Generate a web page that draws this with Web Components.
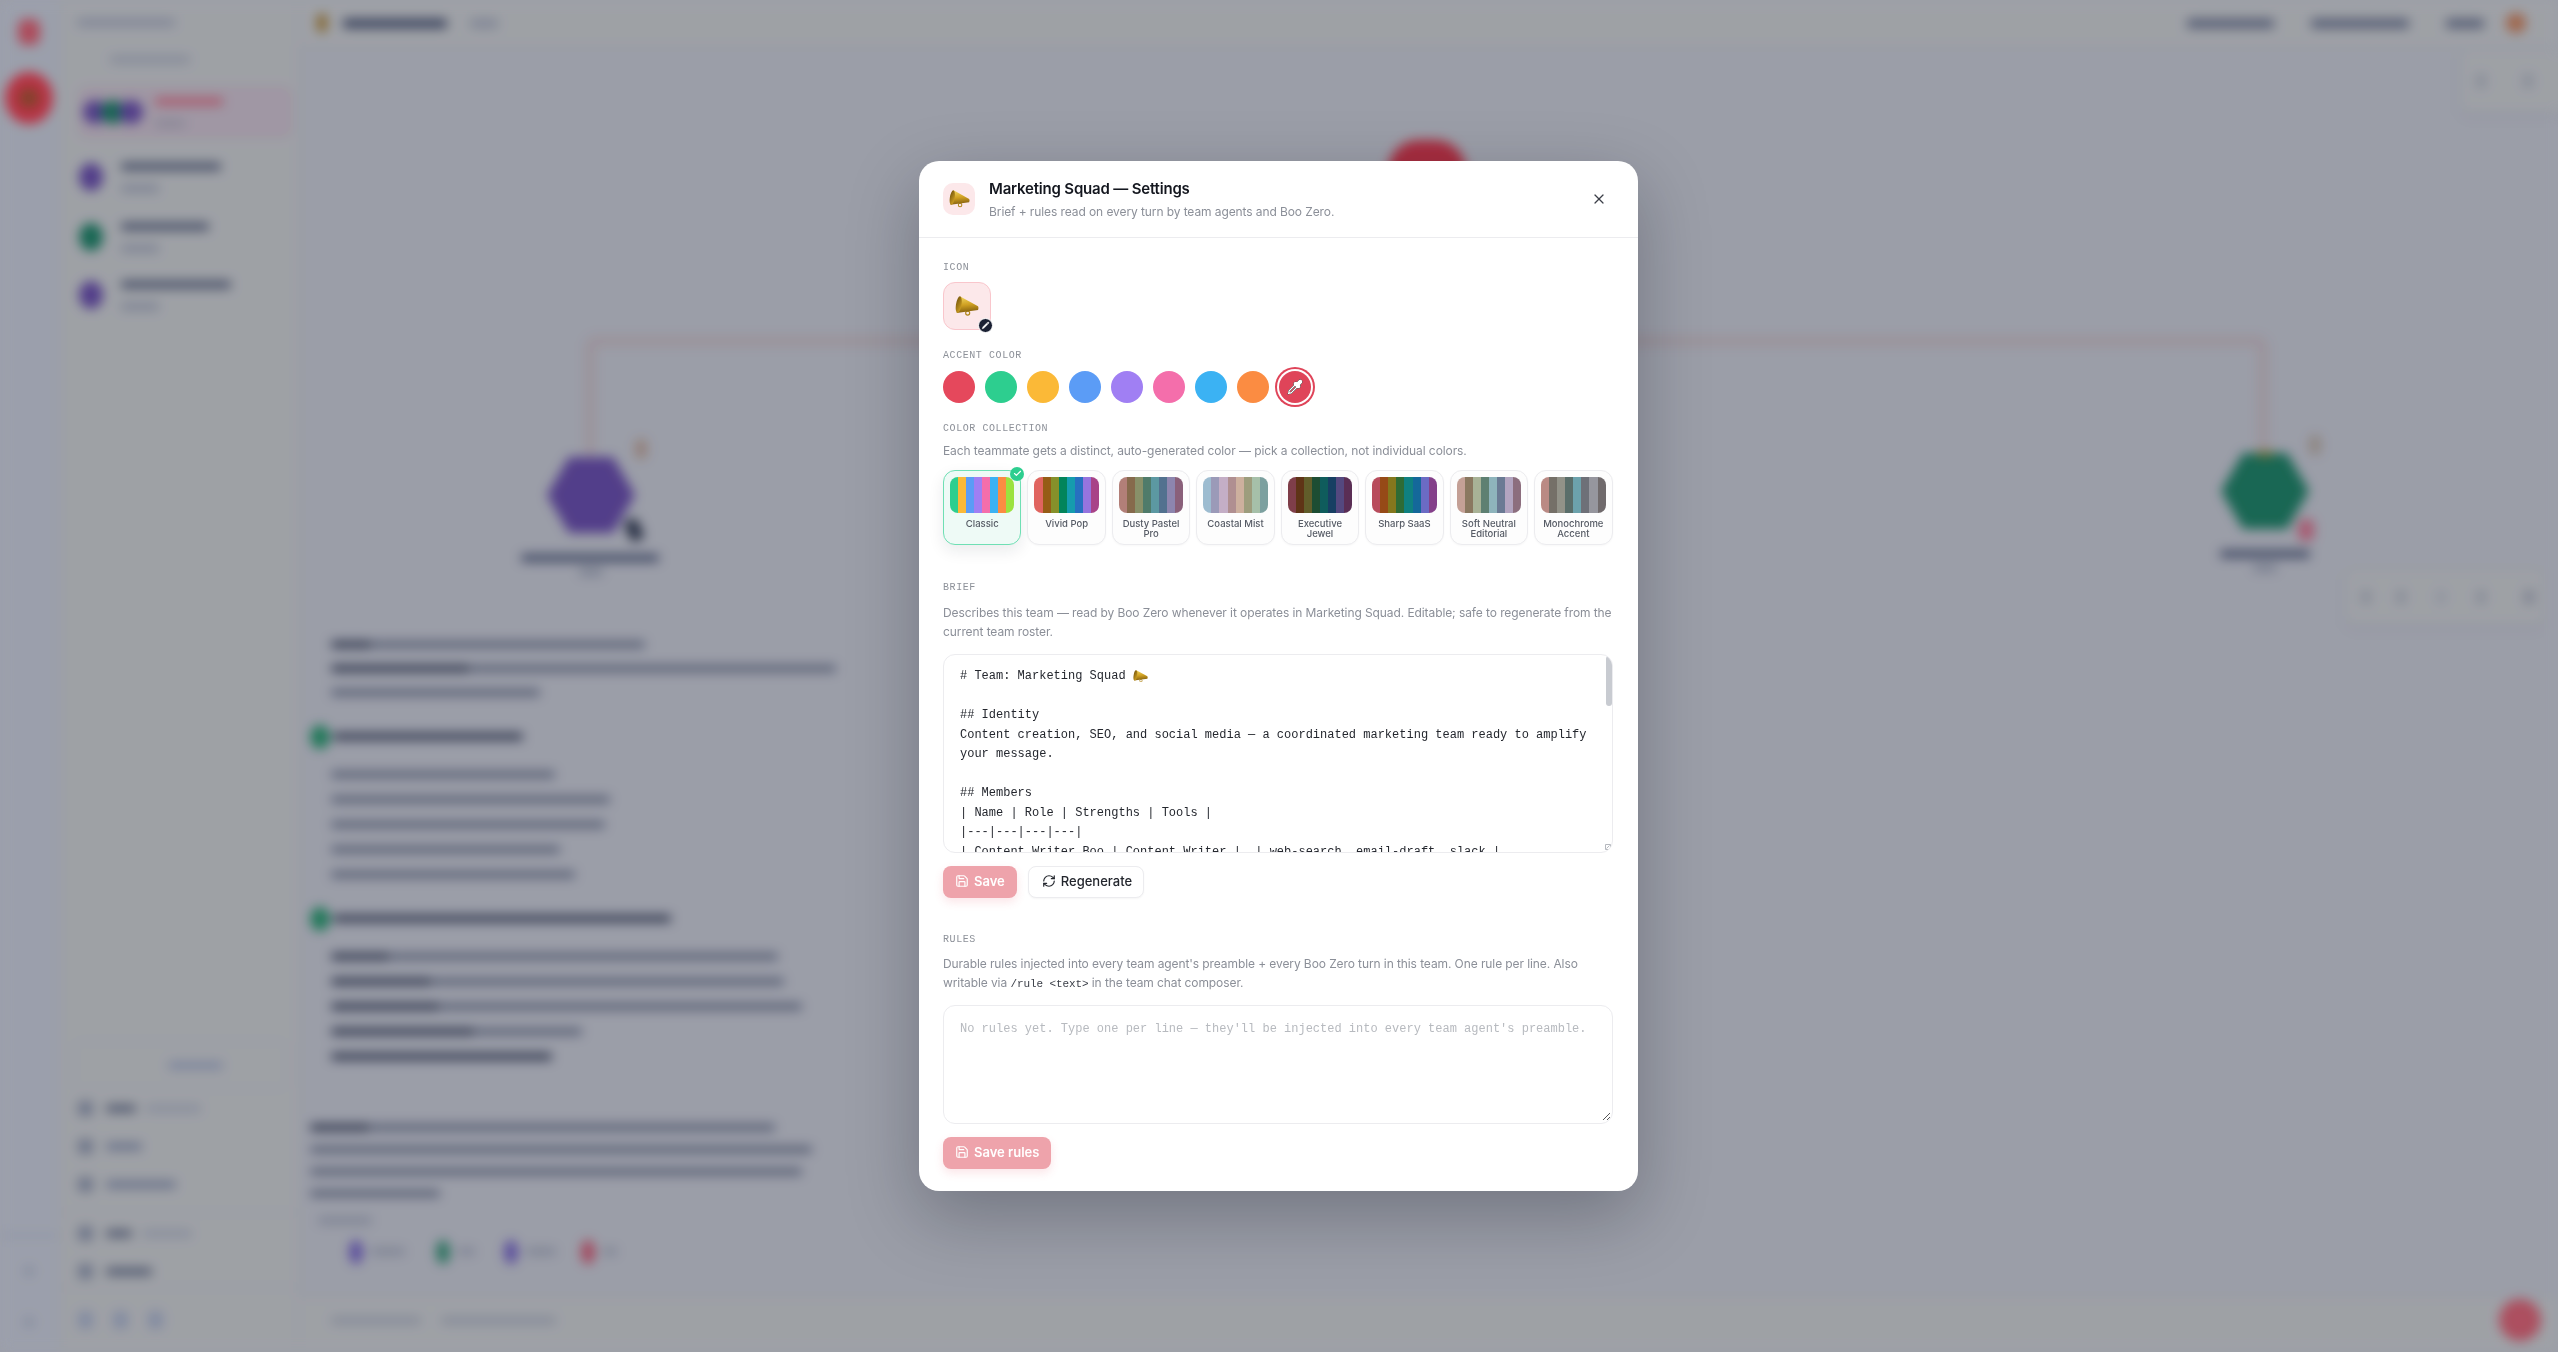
<!DOCTYPE html>
<html lang="en">
<head>
<meta charset="utf-8">
<title>Marketing Squad — Settings</title>
<style>
  html, body { margin: 0; height: 100%; overflow: hidden; background: #faf8f7; }
  body { font-family: Inter, "Liberation Sans", sans-serif; }
</style>
</head>
<body>
<app-page></app-page>

<script>
// Shared lucide icon paths
const ICONS = {
  save: '<path d="M15.2 3a2 2 0 0 1 1.4.6l3.8 3.8a2 2 0 0 1 .6 1.4V19a2 2 0 0 1-2 2H5a2 2 0 0 1-2-2V5a2 2 0 0 1 2-2z"/><path d="M17 21v-7a1 1 0 0 0-1-1H8a1 1 0 0 0-1 1v7"/><path d="M7 3v4a1 1 0 0 0 1 1h7"/>',
  refresh: '<path d="M3 12a9 9 0 0 1 9-9 9.75 9.75 0 0 1 6.74 2.74L21 8"/><path d="M21 3v5h-5"/><path d="M21 12a9 9 0 0 1-9 9 9.75 9.75 0 0 1-6.74-2.74L3 16"/><path d="M8 16H3v5"/>',
  x: '<path d="M18 6 6 18"/><path d="m6 6 12 12"/>',
  check: '<path d="M20 6 9 17l-5-5"/>',
  pencil: '<path fill="#fff" d="M21.174 6.812a1 1 0 0 0-3.986-3.987L3.842 16.174a2 2 0 0 0-.5.83l-1.321 4.352a.5.5 0 0 0 .623.622l4.353-1.32a2 2 0 0 0 .83-.497z"/><path stroke="#1a2033" d="m15 5 4 4"/>',
  pipette: '<path d="m2 22 1-1h3l9-9"/><path d="M3 21v-3l9-9"/><path fill="#fff" stroke="#fff" d="m15 6 3.4-3.4a2.1 2.1 0 1 1 3 3L18 9l.4.4a2.1 2.1 0 1 1-3 3l-3.8-3.8a2.1 2.1 0 1 1 3-3l.4.4Z"/>'
};

function icon(name, size, width) {
  return `<svg xmlns="http://www.w3.org/2000/svg" width="${size}" height="${size}" viewBox="0 0 24 24" fill="none" stroke="currentColor" stroke-width="${width || 2}" stroke-linecap="round" stroke-linejoin="round">${ICONS[name]}</svg>`;
}

// Base class: shadow root filled once from the html() of the subclass
class ShadowElement extends HTMLElement {
  constructor() {
    super();
    this.attachShadow({ mode: "open" });
  }
  connectedCallback() {
    if (!this.shadowRoot.innerHTML) this.shadowRoot.innerHTML = this.html();
  }
}

// Golden megaphone, the team emoji
class MegaPhone extends ShadowElement {
  html() {
    const w = this.getAttribute("size") || 24;
    return `<style>:host { display: inline-flex; vertical-align: middle; } svg { display: block; }</style>
    <svg xmlns="http://www.w3.org/2000/svg" width="${w}" height="${w * 0.84}" viewBox="0 0 25 21">
      <defs>
        <linearGradient id="cone" x1="0.4" y1="0" x2="0.55" y2="1">
          <stop offset="0" stop-color="#f0d45c"/><stop offset="0.5" stop-color="#cfa022"/><stop offset="1" stop-color="#7f5c0e"/>
        </linearGradient>
        <linearGradient id="mouth" x1="0" y1="0" x2="1" y2="1">
          <stop offset="0" stop-color="#6f5009"/><stop offset="1" stop-color="#d8a826"/>
        </linearGradient>
      </defs>
      <circle cx="13.2" cy="17.8" r="2.1" fill="none" stroke="#b08618" stroke-width="1.2"/>
      <path d="M5.5 .4 L24 10.6 Q25 12.4 24 14.6 L1.8 17.6 Z" fill="url(#cone)"/>
      <ellipse cx="3.9" cy="9" rx="2.9" ry="8.8" transform="rotate(9 3.9 9)" fill="url(#mouth)"/>
    </svg>`;
  }
}
customElements.define("mega-phone", MegaPhone);

// Stand-in for a line of text that the backdrop blur makes unreadable
class GhostLine extends ShadowElement {
  html() {
    const bold = this.getAttribute("bold");
    const w = this.getAttribute("w");
    const color = this.getAttribute("color") || "#8b8f9b";
    return `<style>
      :host { display: block; }
      .row { display: flex; align-items: center; height: var(--line, 25px); }
      .part { height: var(--bar, 7px); border-radius: 3px; }
    </style>
    <div class="row">
      ${bold ? `<div class="part" style="width:${bold}px;background:#474b59"></div>` : ""}
      ${+w > +bold ? `<div class="part" style="width:${w - (bold || 0)}px;background:${color}"></div>` : ""}
    </div>`;
  }
}
customElements.define("ghost-line", GhostLine);

class AppRail extends ShadowElement {
  html() {
    return `<style>
      :host { display: flex; flex-direction: column; align-items: center; width: 59px; background: #fbfbfc; border-right: 1px solid #eceef2; box-sizing: border-box; }
      .logo { width: 22px; height: 26px; margin-top: 19px; border-radius: 8px; background: #f27a80; }
      .team { width: 48px; height: 52px; margin-top: 27px; border-radius: 50%; background: #f5555c; display: grid; place-items: center; }
      .team i { width: 20px; height: 20px; border-radius: 50%; background: #b5663c; }
      .grow { flex: 1; }
      .bar { width: 59px; height: 3px; background: #e2e4ea; margin-bottom: 28px; }
      .dot { width: 12px; height: 12px; border-radius: 50%; background: #dfe1e7; margin-bottom: 39px; }
    </style>
    <div class="logo"></div>
    <div class="team"><i></i></div>
    <div class="grow"></div>
    <div class="bar"></div>
    <div class="dot"></div>
    <div class="dot" style="margin-bottom:24px"></div>`;
  }
}
customElements.define("app-rail", AppRail);

class AppSidebar extends ShadowElement {
  agent(color, w, top) {
    return `<div class="agent" style="margin-top:${top}px">
      <div class="avatar" style="background:${color}"></div>
      <div><ghost-line w="${w}" color="#656a7b"></ghost-line><ghost-line w="38" color="#c6c8d0"></ghost-line></div>
    </div>`;
  }
  nav(w, extra, top, dark) {
    return `<div class="nav" style="margin-top:${top}px">
      <div class="icon"></div>
      <ghost-line w="${w}" color="${dark ? "#777c8b" : "#a3a9ba"}"></ghost-line>
      ${extra ? `<ghost-line w="${extra}" color="#d8dae0"></ghost-line>` : ""}
    </div>`;
  }
  html() {
    return `<style>
      :host { display: flex; flex-direction: column; width: 240px; background: #fffdf6; border-right: 1px solid #eeecea; box-sizing: border-box; padding: 0 14px 0 18px; --line: 22px; --bar: 7px; }
      .head { margin-top: 11px; }
      .search { margin: 15px 0 0 33px; }
      .active { display: flex; height: 50px; margin: 16px -8px 0 1px; padding: 0 8px 0 4px; background: #fdeef0; border: 1px solid #fadfe2; border-radius: 8px; align-items: center; position: relative; }
      .stack { display: flex; margin-right: 12px; }
      .stack i { width: 24px; height: 24px; border-radius: 50%; margin-right: -6px; }
      .agent { display: flex; align-items: center; gap: 18px; margin-left: 2px; }
      .avatar { width: 24px; height: 28px; border-radius: 50%; flex: none; }
      .agent ghost-line { --line: 22px; }
      .grow { flex: 1; }
      .new { height: 46px; margin: 0 -4px; border: 1px solid #eeeef0; border-radius: 8px; display: flex; justify-content: center; align-items: center; padding-left: 30px; }
      .nav { display: flex; align-items: center; gap: 10px; height: 22px; }
      .icon { width: 15px; height: 15px; border-radius: 4px; background: #b2b6c0; margin-left: 1px; margin-right: 3px; flex: none; }
      hr { border: 0; border-top: 1px solid #eeecea; margin: 0 -14px 0 -18px; }
      .foot { display: flex; gap: 20px; height: 64px; align-items: center; padding-left: 1px; }
      .foot i { width: 15px; height: 18px; border-radius: 5px; background: #d4d9e6; }
    </style>
    <ghost-line class="head" w="98" color="#c9cbd4"></ghost-line>
    <ghost-line class="search" w="80" color="#d4d5da"></ghost-line>
    <div class="active">
      <div class="stack">
        <i style="background:#7b5eaa"></i><i style="background:#3d9470"></i><i style="background:#7b5eaa"></i>
      </div>
      <div style="margin-left:6px"><ghost-line w="68" color="#f2858f"></ghost-line><ghost-line w="30" color="#d8d2d7"></ghost-line></div>
    </div>
    ${this.agent("#7b5eaa", 100, 17)}
    ${this.agent("#3d9470", 88, 16)}
    ${this.agent("#7b5eaa", 110, 14)}
    <div class="grow"></div>
    <div class="new"><ghost-line w="55" color="#c4cadc"></ghost-line></div>
    ${this.nav(30, 55, 8, true)}
    ${this.nav(36, 0, 16)}
    ${this.nav(70, 0, 16)}
    <hr style="margin-top:17px">
    ${this.nav(26, 50, 9, true)}
    ${this.nav(46, 0, 16, true)}
    <div style="height:5px"></div>
    <hr>
    <div class="foot"><i></i><i></i><i></i></div>`;
  }
}
customElements.define("app-sidebar", AppSidebar);

class AppTopbar extends ShadowElement {
  html() {
    return `<style>
      :host { display: flex; align-items: center; height: 46px; flex: none; background: #fffdf6; border-bottom: 1px solid #eeeef0; padding: 0 32px 0 18px; --bar: 9px; }
      .left { display: flex; align-items: center; gap: 18px; flex: 1; }
      .emoji { width: 10px; height: 18px; border-radius: 4px; background: #c49a4c; margin-right: -2px; }
      .right { display: flex; align-items: center; gap: 37px; }
      .me { display: flex; align-items: center; gap: 22px; }
      .me i { width: 20px; height: 20px; border-radius: 50%; background: #e99f72; }
    </style>
    <div class="left">
      <div class="emoji"></div>
      <ghost-line w="104" color="#585d70"></ghost-line>
      <ghost-line w="28" color="#cdcfd5" style="margin-left:5px"></ghost-line>
    </div>
    <div class="right">
      <ghost-line w="87" color="#868a99"></ghost-line>
      <ghost-line w="98" color="#868a99"></ghost-line>
      <div class="me"><ghost-line w="38" color="#868a99"></ghost-line><i></i></div>
    </div>`;
  }
}
customElements.define("app-topbar", AppTopbar);

// The team diagram: nodes sit on a free canvas, so they are placed absolutely
class TeamCanvas extends ShadowElement {
  node(x, y, color, top) {
    return `<div class="hex" style="left:${x - 299 - 44}px;top:${y - 46 - 38}px;background:${color}"></div>
      <ghost-line class="free" style="left:${x - 299 - 12}px;top:${y - 46 + 71}px" w="24" color="#c4c6cc"></ghost-line>
      ${top ? `<div class="free" style="left:${x - 299 - 8}px;top:${y - 46 - 40}px;width:16px;height:6px;border-radius:3px;background:${top}"></div>` : ""}`;
  }
  html() {
    return `<style>
      :host { position: absolute; inset: 0; display: block; --bar: 8px; --line: 12px; }
      svg { position: absolute; inset: 0; }
      .hex { position: absolute; width: 88px; height: 76px; clip-path: polygon(25% 0, 75% 0, 100% 50%, 75% 100%, 25% 100%, 0 50%); }
      .free { position: absolute; }
      .panel { position: absolute; background: #fffdf6; border: 1px solid #eeeef0; border-radius: 8px; box-shadow: 0 4px 8px rgba(20,20,40,.05); }
      .panel i { position: absolute; top: 50%; width: 10px; height: 14px; margin-top: -7px; border-radius: 3px; background: #dcdcde; }
    </style>
    <svg width="2259" height="600" fill="none">
      <path d="M291 409 V301 Q291 294 298 294 H1957 Q1964 294 1964 301 V404" stroke="#f0d2cc" stroke-opacity=".42" stroke-width="12"/>
    </svg>
    <div class="free" style="left:1089px;top:93px;width:78px;height:62px;border-radius:40px;background:#e04a52"></div>
    ${this.node(591, 494, "#7b5eaa")}
    ${this.node(2265, 490, "#3d9470", "#b0a74e")}
    <ghost-line class="free" style="left:222px;top:505px" w="138" color="#6c7183"></ghost-line>
    <ghost-line class="free" style="left:1921px;top:501px" w="90" color="#6c7183"></ghost-line>
    <div class="free" style="left:336px;top:392px;width:12px;height:20px;border-radius:5px;background:#e3c8b3"></div>
    <div class="free" style="left:328px;top:472px;width:14px;height:22px;border-radius:4px;background:#40444f;transform:rotate(-25deg)"></div>
    <div class="free" style="left:2010px;top:388px;width:12px;height:20px;border-radius:5px;background:#dfd0be"></div>
    <div class="free" style="left:1999px;top:472px;width:16px;height:22px;border-radius:6px;background:#f0919f"></div>
    <div class="panel" style="left:2161px;top:2px;width:110px;height:62px">
      <i style="left:15px"></i><i style="left:62px"></i>
    </div>
    <div class="panel" style="left:2046px;top:522px;width:198px;height:54px">
      <i style="left:15px"></i><i style="left:50px"></i><i style="left:90px;background:#e8e8ea"></i><i style="left:130px"></i><i style="left:178px;background:#cdcdd1"></i>
    </div>`;
  }
}
customElements.define("team-canvas", TeamCanvas);

// Chat message under the diagram, unreadable behind the blur
class ChatSummary extends ShadowElement {
  heading(w) {
    return `<div class="head"><i></i><ghost-line w="${w}" color="#474b59"></ghost-line></div>`;
  }
  html() {
    const lines = (rows) => rows.map(([w, b]) => `<ghost-line w="${w}" ${b ? `bold="${b}"` : ""}></ghost-line>`).join("");
    return `<style>
      :host { position: relative; display: block; padding: 585px 0 0 11px; --bar: 7px; --line: 25px; }
      .indent { margin-left: 21px; }
      .head { display: flex; align-items: center; gap: 3px; height: 25px; margin: 20px 0 13px 0; }
      .head i { width: 20px; height: 24px; border-radius: 50%; background: #4fb07f; flex: none; }
      .para { margin-top: 47px; --line: 22px; }
      .chips { display: flex; margin: 6px 0 0 39px; }
      .chip { display: flex; align-items: center; gap: 8px; }
      .chip i { width: 14px; height: 24px; border-radius: 50%; flex: none; }
    </style>
    <div class="indent" style="--line:24px">
      ${lines([[314, 41], [505, 139], [209]])}
    </div>
    ${this.heading(190)}
    <div class="indent">${lines([[224], [279], [274], [229], [244]])}</div>
    <div style="margin-top:-1px">${this.heading(338)}</div>
    <div class="indent">${lines([[447, 59], [453, 101], [471, 109], [251, 144], [221, 221]])}</div>
    <div class="para">${lines([[465, 60], [502], [492], [130]])}</div>
    <ghost-line w="54" color="#c8cad0" style="margin:4px 0 0 8px"></ghost-line>
    <div class="chips">
      <div class="chip" style="width:87px"><i style="background:#8c78c8"></i><ghost-line w="34" color="#c8cad0"></ghost-line></div>
      <div class="chip" style="width:68px"><i style="background:#5aa884"></i><ghost-line w="17" color="#c8cad0"></ghost-line></div>
      <div class="chip" style="width:77px"><i style="background:#8c78c8"></i><ghost-line w="30" color="#c8cad0"></ghost-line></div>
      <div class="chip"><i style="background:#e47380"></i><ghost-line w="14" color="#c8cad0"></ghost-line></div>
    </div>`;
  }
}
customElements.define("chat-summary", ChatSummary);

class ChatComposer extends ShadowElement {
  html() {
    return `<style>
      :host { display: flex; align-items: center; height: 56px; flex: none; box-sizing: border-box; padding: 0 17px 9px 32px; background: #fffdf6; border-top: 1px solid #eeeef0; --bar: 7px; }
      .grow { flex: 1; display: flex; gap: 20px; }
      .send { width: 42px; height: 42px; border-radius: 50%; background: #f37f85; }
    </style>
    <div class="grow"><ghost-line w="90" color="#d4d6da"></ghost-line><ghost-line w="115" color="#d4d6da"></ghost-line></div>
    <div class="send"></div>`;
  }
}
customElements.define("chat-composer", ChatComposer);

// Mono uppercase label, description slot, control slot
class SettingsSection extends ShadowElement {
  html() {
    return `<style>
      :host { display: block; }
      /* tall line box with a negative margin drops the caps to where the reference has them */
      .label { font: 400 10px/17px "Liberation Mono", monospace; margin-bottom: -3px; letter-spacing: .57px; color: #8d9199; }
      ::slotted([slot=desc]) { display: block; font-size: 12px; line-height: 19.2px; letter-spacing: -.09px; color: #8b8f98; }
    </style>
    <div class="label">${this.getAttribute("label")}</div>
    <slot name="desc"></slot>
    <slot></slot>`;
  }
}
customElements.define("settings-section", SettingsSection);

class IconTile extends ShadowElement {
  html() {
    return `<style>
      :host { display: grid; place-items: center; position: relative; width: 48px; height: 48px; box-sizing: border-box; border: 1px solid #f9c6cc; border-radius: 12px; background: #fce8ea; }
      .badge { position: absolute; right: -3px; bottom: -4px; width: 13px; height: 13px; border-radius: 50%; background: #1a2033; border: 1.5px solid #fff; color: #1a2033; display: grid; place-items: center; }
      svg { display: block; }
    </style>
    <mega-phone size="24"></mega-phone>
    <div class="badge">${icon("pencil", 9, 1)}</div>`;
  }
}
customElements.define("icon-tile", IconTile);

class AccentPicker extends ShadowElement {
  html() {
    const colors = ["#e5485c", "#2dce8f", "#fbb937", "#5b9cf6", "#a07ff3", "#f46eab", "#3bb2f3", "#fb8c42"];
    return `<style>
      :host { display: flex; gap: 10px; }
      .dot { width: 32px; height: 32px; border-radius: 50%; }
      .custom { display: grid; place-items: center; background: #df4459; color: #fff; box-shadow: 0 0 0 2px #fff, 0 0 0 4px #df4459; }
      svg { display: block; filter: drop-shadow(0 0 .7px #111) drop-shadow(0 0 .5px #111); }
    </style>
    ${colors.map((c) => `<div class="dot" style="background:${c}"></div>`).join("")}
    <div class="dot custom">${icon("pipette", 16, 2)}</div>`;
  }
}
customElements.define("accent-picker", AccentPicker);

class PaletteCard extends ShadowElement {
  html() {
    const colors = this.getAttribute("colors").split(" ");
    const on = this.hasAttribute("selected");
    return `<style>
      :host { display: block; position: relative; box-sizing: border-box; height: 75.5px; padding: 6px; border-radius: 12px;
        border: ${on ? "1px solid #6fdfb4" : "1px solid #ececef"}; background: ${on ? "#eefaf6" : "#fdfdfd"};
        ${on ? "box-shadow: 0 6px 16px rgba(20,30,40,.09);" : "box-shadow: 0 1px 2px rgba(0,0,0,.03);"} }
      .strip { display: flex; height: 36px; border-radius: 8px; overflow: hidden; }
      .strip i { flex: 1; }
      .name { margin-top: 6px; font-size: 9.5px; line-height: 10px; font-weight: 500; text-align: center; color: #565b65; }
      .tick { position: absolute; top: -4px; right: -4px; width: 14px; height: 14px; border-radius: 50%; background: #2dce8f; color: #fff; display: grid; place-items: center; }
    </style>
    <div class="strip">${colors.map((c) => `<i style="background:${c}"></i>`).join("")}</div>
    <div class="name"><slot></slot></div>
    ${on ? `<div class="tick">${icon("check", 9, 3)}</div>` : ""}`;
  }
}
customElements.define("palette-card", PaletteCard);

// Looks like a textarea; a div so that the emoji and the clipped lines are real text
class EditorBox extends ShadowElement {
  html() {
    const grip = this.hasAttribute("grip");
    return `<style>
      :host { display: block; position: relative; box-sizing: border-box; overflow: hidden; border: 1px solid #ececef; border-radius: 12px; background: #fff;
        padding: 12.5px 16px; font: 12px/19.55px "Liberation Mono", monospace; color: #24272e; white-space: pre-wrap; }
      .thumb { position: absolute; top: 1px; right: 0; width: 6px; height: 50px; border-radius: 3px; background: #c8cbd1; }
      .corner { position: absolute; right: 1px; bottom: 2px; display: block; }
    </style><slot></slot>${this.hasAttribute("scroll") ? `<div class="thumb"></div>` : ""}
    ${grip
      ? `<svg class="corner" width="9" height="9" viewBox="0 0 9 9" stroke="#555" stroke-width="1"><path d="M1 8 8 1M5 8 8 5"/></svg>`
      : `<svg class="corner" width="6" height="6" viewBox="0 0 6 6" fill="none" stroke="#b5b8be" stroke-width="1"><path d="M.5.5h5v5h-5zM1.5 4.5 4.5 1.5"/></svg>`}`;
  }
}
customElements.define("editor-box", EditorBox);

class ActionButton extends ShadowElement {
  html() {
    const primary = this.hasAttribute("primary");
    const name = this.getAttribute("icon");
    return `<style>
      :host { display: inline-flex; align-items: center; gap: 5px; box-sizing: border-box; height: 32px; padding-bottom: 1px; border-radius: 8px; font-size: 13px; line-height: 30px; font-weight: ${primary ? 600 : 500};
        ${primary
          ? "padding-left: 12px; padding-right: 12px; color: #fff; background: #eea3ab; box-shadow: 0 4px 10px rgba(230,70,90,.14);"
          : "padding-left: 13px; padding-right: 11px; color: #23262d; background: #fff; border: 1px solid #ececef; box-shadow: 0 1px 2px rgba(0,0,0,.04);"} }
      svg { display: block; }
    </style>
    ${icon(name, 14, 2)}<slot></slot>`;
  }
}
customElements.define("action-button", ActionButton);

class SettingsModal extends ShadowElement {
  html() {
    return `<style>
      :host { display: block; width: 719px; height: 1030px; box-sizing: border-box; background: #fff; border-radius: 20px; box-shadow: 0 24px 70px rgba(10,14,30,.28); color: #14171f; overflow: hidden; }
      header { display: flex; gap: 14px; height: 77px; box-sizing: border-box; padding: 18px 24px 0 24.5px; border-bottom: 1px solid #ececef; }
      .team { width: 32px; height: 32px; margin-top: 4px; border-radius: 10px; background: #fce8ea; display: grid; place-items: center; flex: none; }
      .titles { flex: 1; }
      h1 { margin: 0; font-size: 15px; line-height: 20px; font-weight: 600; letter-spacing: -.19px; color: #14171f; }
      .sub { margin-top: 3px; font-size: 12px; line-height: 20px; letter-spacing: -.09px; color: #8b8f98; }
      .close { width: 16px; height: 16px; margin: 12px 7px 0 0; color: #3b3f48; }
      .close svg { display: block; }
      main { padding: 21px 25px 0 24.5px; }
      icon-tile { margin-top: 9px; }
      accent-picker { margin-top: 10px; }
      .cards { display: grid; grid-template-columns: repeat(8, 1fr); gap: 6px; margin: 9.5px 0 0; }
      .desc-a { margin-top: 7px; }
      .desc-b { margin-top: 10px; }
      code { font: 11px "Liberation Mono", monospace; color: #3a3e47; }
      .actions { display: flex; gap: 11px; margin-top: 13px; }
      .brief { height: 199px; margin-top: 12.5px; }
      .rules { height: 119px; margin-top: 12.5px; padding-top: 14px; color: #b7babf; }
    </style>
    <header>
      <div class="team"><mega-phone size="21"></mega-phone></div>
      <div class="titles">
        <h1>Marketing Squad — Settings</h1>
        <div class="sub">Brief + rules read on every turn by team agents and Boo Zero.</div>
      </div>
      <div class="close">${icon("x", 16, 1.8)}</div>
    </header>
    <main>
      <settings-section label="ICON"><icon-tile></icon-tile></settings-section>
      <settings-section label="ACCENT COLOR" style="margin-top:17px"><accent-picker></accent-picker></settings-section>
      <settings-section label="COLOR COLLECTION" style="margin-top:17px">
        <div slot="desc" class="desc-a">Each teammate gets a distinct, auto-generated color — pick a collection, not individual colors.</div>
        <div class="cards">
          <palette-card selected colors="#2dce8f #fbb937 #5b9cf6 #a07ff3 #f46eab #3bb2f3 #fb8c42 #9ae23f">Classic</palette-card>
          <palette-card colors="#e0645f #965c16 #86902a #02845a #159cae #2770c0 #9674de #a84388">Vivid Pop</palette-card>
          <palette-card colors="#b27f78 #866a4c #889069 #4f7b6a #5c98a2 #52718f #8d85ae #8a607a">Dusty Pastel Pro</palette-card>
          <palette-card colors="#9dbcd0 #9b9ab8 #c4aec6 #b08f91 #cdb09e #9d9d7d #a6c0a9 #7ca09f">Coastal Mist</palette-card>
          <palette-card colors="#7f3e49 #5f3416 #615d2a #1d4d33 #0f5c5c #173f63 #54487f #5a2e55">Executive Jewel</palette-card>
          <palette-card colors="#b84c5c #964a17 #84771d #2e6b35 #0f8080 #14689a #6b6bc4 #84408a">Sharp SaaS</palette-card>
          <palette-card colors="#c4a096 #8a7860 #a8b296 #5e8072 #8eb4bc #6a7a94 #b2a4c0 #8c6e7e">Soft Neutral Editorial</palette-card>
          <palette-card colors="#ba8a84 #757068 #929288 #5a6e6a #6ca2ac #6e7078 #96969e #706a6c">Monochrome Accent</palette-card>
        </div>
      </settings-section>
      <settings-section label="BRIEF" style="margin-top:33.5px">
        <div slot="desc" class="desc-b">Describes this team — read by Boo Zero whenever it operates in Marketing Squad. Editable; safe to regenerate from the current team roster.</div>
        <editor-box class="brief" scroll># Team: Marketing Squad <mega-phone size="15"></mega-phone>

## Identity
Content creation, SEO, and social media — a coordinated marketing team ready to amplify your message.

## Members
| Name | Role | Strengths | Tools |
|---|---|---|---|
| Content Writer Boo | Content Writer |  | web-search, email-draft, slack |</editor-box>
        <div class="actions">
          <action-button primary icon="save">Save</action-button>
          <action-button icon="refresh">Regenerate</action-button>
        </div>
      </settings-section>
      <settings-section label="RULES" style="margin-top:33px">
        <div slot="desc" class="desc-b" style="margin-top:9px">Durable rules injected into every team agent's preamble + every Boo Zero turn in this team. One rule per line. Also writable via <code>/rule &lt;text&gt;</code> in the team chat composer.</div>
        <editor-box class="rules" grip>No rules yet. Type one per line — they'll be injected into every team agent's preamble.</editor-box>
        <div class="actions"><action-button primary icon="save">Save rules</action-button></div>
      </settings-section>
    </main>`;
  }
}
customElements.define("settings-modal", SettingsModal);

// Whole page: blurred app shell under a dark scrim, modal on top.
// Saturate sits over shell + scrim together, which keeps the reds strong.
class AppPage extends ShadowElement {
  html() {
    return `<style>
      :host { display: block; position: relative; width: 100vw; height: 100vh; overflow: hidden; }
      .backdrop { position: absolute; inset: 0; filter: saturate(1.4); }
      .shell { display: flex; height: 100%; filter: blur(6px); }
      .main { flex: 1; display: flex; flex-direction: column; min-width: 0; }
      .stage { position: relative; flex: 1; background: #faf8f7; min-height: 0; }
      .tint { position: absolute; inset: 0; background: rgba(15,23,42,.4); }
      .center { position: absolute; inset: 0; padding-right: 2px; box-sizing: border-box; display: flex; align-items: center; justify-content: center; }
    </style>
    <div class="backdrop">
      <div class="shell">
        <app-rail></app-rail>
        <app-sidebar></app-sidebar>
        <div class="main">
          <app-topbar></app-topbar>
          <div class="stage"><team-canvas></team-canvas><chat-summary></chat-summary></div>
          <chat-composer></chat-composer>
        </div>
      </div>
      <div class="tint"></div>
    </div>
    <div class="center"><settings-modal></settings-modal></div>`;
  }
}
customElements.define("app-page", AppPage);
</script>
</body>
</html>
